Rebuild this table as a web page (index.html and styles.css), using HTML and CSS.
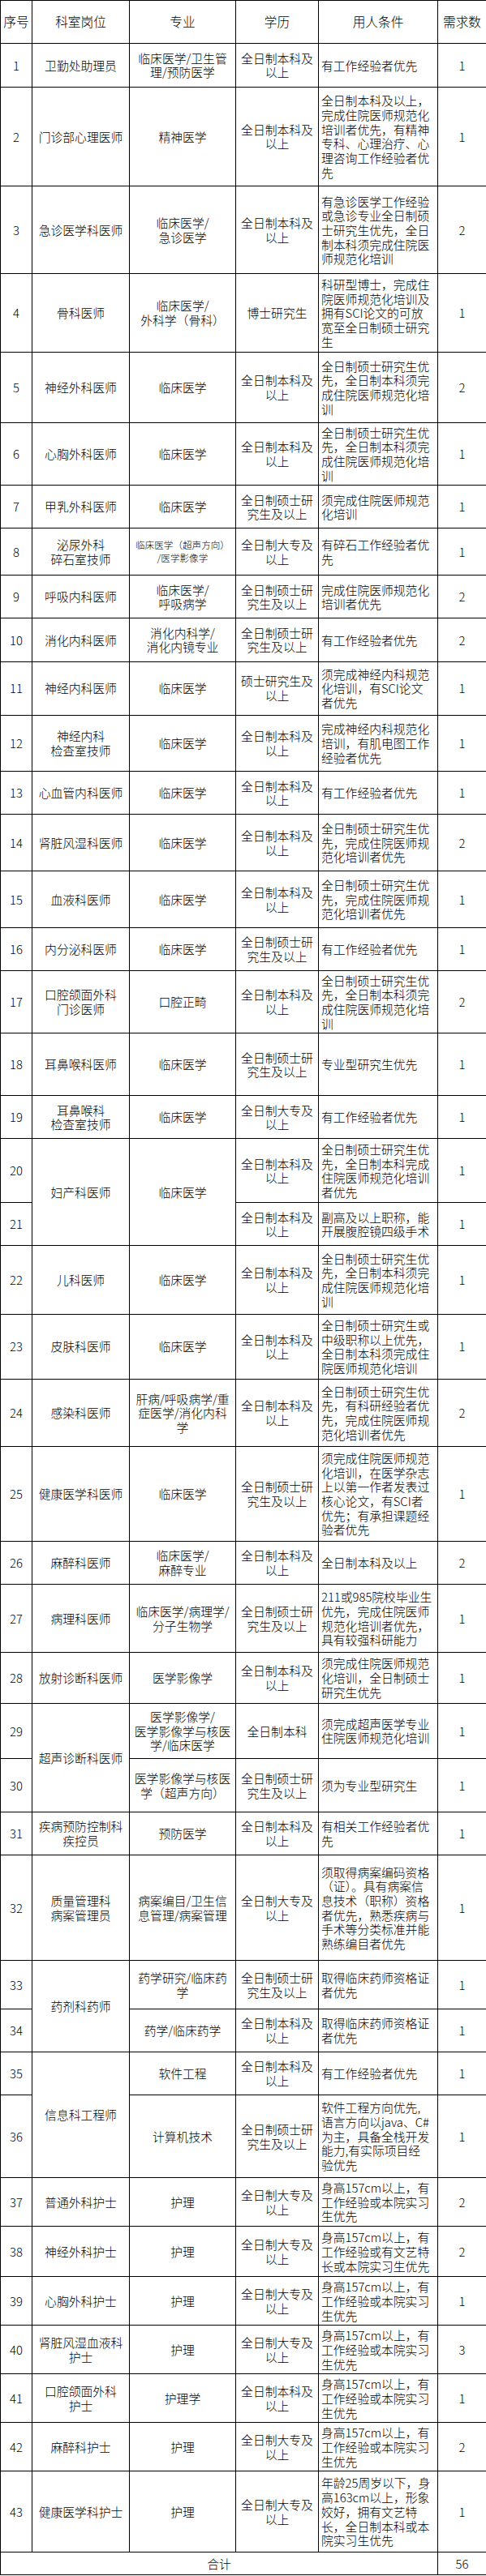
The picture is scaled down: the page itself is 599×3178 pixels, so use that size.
FILE: index.html
```html
<!DOCTYPE html>
<html lang="zh-CN">
<head>
<meta charset="utf-8">
<title>招聘岗位表</title>
<link rel="stylesheet" href="styles.css">
</head>
<body>
<table class="jobs">
<colgroup>
<col class="c-no"><col class="c-dept"><col class="c-major"><col class="c-edu"><col class="c-cond"><col class="c-num">
</colgroup>
<thead>
<tr class="h533 head"><th>序号</th><th>科室岗位</th><th>专业</th><th>学历</th><th>用人条件</th><th>需求数</th></tr>
</thead>
<tbody>
<tr class="h534"><td>1</td><td>卫勤处助理员</td><td>临床医学/卫生管<br>理/预防医学</td><td>全日制本科及<br>以上</td><td class="cond">有工作经验者优先</td><td>1</td></tr>
<tr class="h1226"><td>2</td><td>门诊部心理医师</td><td>精神医学</td><td>全日制本科及<br>以上</td><td class="cond">全日制本科及以上，<br>完成住院医师规范化<br>培训者优先，有精神<br>专科、心理治疗、心<br>理咨询工作经验者优<br>先</td><td>1</td></tr>
<tr class="h108"><td>3</td><td>急诊医学科医师</td><td>临床医学/<br>急诊医学</td><td>全日制本科及<br>以上</td><td class="cond">有急诊医学工作经验<br>或急诊专业全日制硕<br>士研究生优先，全日<br>制本科须完成住院医<br>师规范化培训</td><td>2</td></tr>
<tr class="h967"><td>4</td><td>骨科医师</td><td>临床医学/<br>外科学（骨科）</td><td>博士研究生</td><td class="cond">科研型博士，完成住<br>院医师规范化培训及<br>拥有SCI论文的可放<br>宽至全日制硕士研究<br>生</td><td>1</td></tr>
<tr class="h87"><td>5</td><td>神经外科医师</td><td>临床医学</td><td>全日制本科及<br>以上</td><td class="cond">全日制硕士研究生优<br>先，全日制本科须完<br>成住院医师规范化培<br>训</td><td>2</td></tr>
<tr class="h773"><td>6</td><td>心胸外科医师</td><td>临床医学</td><td>全日制本科及<br>以上</td><td class="cond">全日制硕士研究生优<br>先，全日制本科须完<br>成住院医师规范化培<br>训</td><td>1</td></tr>
<tr class="h53"><td>7</td><td>甲乳外科医师</td><td>临床医学</td><td>全日制硕士研<br>究生及以上</td><td class="cond">须完成住院医师规范<br>化培训</td><td>1</td></tr>
<tr class="h58"><td>8</td><td>泌尿外科<br>碎石室技师</td><td class="small">临床医学（超声方向）<br>/医学影像学</td><td>全日制大专及<br>以上</td><td class="cond">有碎石工作经验者优<br>先</td><td>1</td></tr>
<tr class="h53"><td>9</td><td>呼吸内科医师</td><td>临床医学/<br>呼吸病学</td><td>全日制硕士研<br>究生及以上</td><td class="cond">完成住院医师规范化<br>培训者优先</td><td>2</td></tr>
<tr class="h534"><td>10</td><td>消化内科医师</td><td>消化内科学/<br>消化内镜专业</td><td>全日制硕士研<br>究生及以上</td><td class="cond">有工作经验者优先</td><td>2</td></tr>
<tr class="h66"><td>11</td><td>神经内科医师</td><td>临床医学</td><td>硕士研究生及<br>以上</td><td class="cond">须完成神经内科规范<br>化培训，有SCI论文<br>者优先</td><td>1</td></tr>
<tr class="h696"><td>12</td><td>神经内科<br>检查室技师</td><td>临床医学</td><td>全日制本科及<br>以上</td><td class="cond">完成神经内科规范化<br>培训，有肌电图工作<br>经验者优先</td><td>1</td></tr>
<tr class="h53"><td>13</td><td>心血管内科医师</td><td>临床医学</td><td>全日制本科及<br>以上</td><td class="cond">有工作经验者优先</td><td>1</td></tr>
<tr class="h697"><td>14</td><td>肾脏风湿科医师</td><td>临床医学</td><td>全日制本科及<br>以上</td><td class="cond">全日制硕士研究生优<br>先，完成住院医师规<br>范化培训者优先</td><td>2</td></tr>
<tr class="h703"><td>15</td><td>血液科医师</td><td>临床医学</td><td>全日制本科及<br>以上</td><td class="cond">全日制硕士研究生优<br>先，完成住院医师规<br>范化培训者优先</td><td>1</td></tr>
<tr class="h527"><td>16</td><td>内分泌科医师</td><td>临床医学</td><td>全日制硕士研<br>究生及以上</td><td class="cond">有工作经验者优先</td><td>1</td></tr>
<tr class="h773"><td>17</td><td>口腔颌面外科<br>门诊医师</td><td>口腔正畸</td><td>全日制本科及<br>以上</td><td class="cond">全日制硕士研究生优<br>先，全日制本科须完<br>成住院医师规范化培<br>训</td><td>2</td></tr>
<tr class="h77"><td>18</td><td>耳鼻喉科医师</td><td>临床医学</td><td>全日制硕士研<br>究生及以上</td><td class="cond">专业型研究生优先</td><td>1</td></tr>
<tr class="h53"><td>19</td><td>耳鼻喉科<br>检查室技师</td><td>临床医学</td><td>全日制大专及<br>以上</td><td class="cond">有工作经验者优先</td><td>1</td></tr>
<tr class="h79"><td>20</td><td rowspan="2">妇产科医师</td><td rowspan="2">临床医学</td><td>全日制本科及<br>以上</td><td class="cond">全日制硕士研究生优<br>先，全日制本科完成<br>住院医师规范化培训<br>者优先</td><td>1</td></tr>
<tr class="h53"><td>21</td><td>全日制本科及<br>以上</td><td class="cond">副高及以上职称，能<br>开展腹腔镜四级手术</td><td>1</td></tr>
<tr class="h844"><td>22</td><td>儿科医师</td><td>临床医学</td><td>全日制本科及<br>以上</td><td class="cond">全日制硕士研究生优<br>先，全日制本科须完<br>成住院医师规范化培<br>训</td><td>1</td></tr>
<tr class="h803"><td>23</td><td>皮肤科医师</td><td>临床医学</td><td>全日制本科及<br>以上</td><td class="cond">全日制硕士研究生或<br>中级职称以上优先，<br>全日制本科须完成住<br>院医师规范化培训</td><td>1</td></tr>
<tr class="h833"><td>24</td><td>感染科医师</td><td>肝病/呼吸病学/重<br>症医学/消化内科<br>学</td><td>全日制本科及<br>以上</td><td class="cond">全日制硕士研究生优<br>先，有科研经验者优<br>先，完成住院医师规<br>范化培训者优先</td><td>2</td></tr>
<tr class="h1167"><td>25</td><td>健康医学科医师</td><td>临床医学</td><td>全日制硕士研<br>究生及以上</td><td class="cond">须完成住院医师规范<br>化培训，在医学杂志<br>上以第一作者发表过<br>核心论文，有SCI者<br>优先；有承担课题经<br>验者优先</td><td>1</td></tr>
<tr class="h533"><td>26</td><td>麻醉科医师</td><td>临床医学/<br>麻醉专业</td><td>全日制本科及<br>以上</td><td class="cond">全日制本科及以上</td><td>2</td></tr>
<tr class="h84"><td>27</td><td>病理科医师</td><td>临床医学/病理学/<br>分子生物学</td><td>全日制硕士研<br>究生及以上</td><td class="cond">211或985院校毕业生<br>优先，完成住院医师<br>规范化培训者优先，<br>具有较强科研能力</td><td>1</td></tr>
<tr class="h624"><td>28</td><td>放射诊断科医师</td><td>医学影像学</td><td>全日制本科及<br>以上</td><td class="cond">须完成住院医师规范<br>化培训，全日制硕士<br>研究生优先</td><td>1</td></tr>
<tr class="h686"><td>29</td><td rowspan="2">超声诊断科医师</td><td>医学影像学/<br>医学影像学与核医<br>学/临床医学</td><td>全日制本科</td><td class="cond">须完成超声医学专业<br>住院医师规范化培训</td><td>1</td></tr>
<tr class="h66"><td>30</td><td>医学影像学与核医<br>学（超声方向）</td><td>全日制硕士研<br>究生及以上</td><td class="cond">须为专业型研究生</td><td>1</td></tr>
<tr class="h53"><td>31</td><td>疾病预防控制科<br>疾控员</td><td>预防医学</td><td>全日制本科及<br>以上</td><td class="cond">有相关工作经验者优<br>先</td><td>1</td></tr>
<tr class="h130"><td>32</td><td>质量管理科<br>病案管理员</td><td>病案编目/卫生信<br>息管理/病案管理</td><td>全日制大专及<br>以上</td><td class="cond">须取得病案编码资格<br>（证）。具有病案信<br>息技术（职称）资格<br>者优先，熟悉疾病与<br>手术等分类标准并能<br>熟练编目者优先</td><td>1</td></tr>
<tr class="h60"><td>33</td><td rowspan="2">药剂科药师</td><td>药学研究/临床药<br>学</td><td>全日制硕士研<br>究生及以上</td><td class="cond">取得临床药师资格证<br>者优先</td><td>1</td></tr>
<tr class="h53"><td>34</td><td>药学/临床药学</td><td>全日制本科及<br>以上</td><td class="cond">取得临床药师资格证<br>者优先</td><td>1</td></tr>
<tr class="h53"><td>35</td><td rowspan="2">信息科工程师</td><td>软件工程</td><td>全日制本科及<br>以上</td><td class="cond">有工作经验者优先</td><td>1</td></tr>
<tr class="h1017"><td>36</td><td>计算机技术</td><td>全日制硕士研<br>究生及以上</td><td class="cond">软件工程方向优先,<br>语言方向以java、C#<br>为主，具备全栈开发<br>能力,有实际项目经<br>验优先</td><td>1</td></tr>
<tr class="h603"><td>37</td><td>普通外科护士</td><td>护理</td><td>全日制大专及<br>以上</td><td class="cond">身高157cm以上，有<br>工作经验或本院实习<br>生优先</td><td>2</td></tr>
<tr class="h62"><td>38</td><td>神经外科护士</td><td>护理</td><td>全日制大专及<br>以上</td><td class="cond">身高157cm以上，有<br>工作经验或有文艺特<br>长或本院实习生优先</td><td>2</td></tr>
<tr class="h60"><td>39</td><td>心胸外科护士</td><td>护理</td><td>全日制大专及<br>以上</td><td class="cond">身高157cm以上，有<br>工作经验或本院实习<br>生优先</td><td>1</td></tr>
<tr class="h60"><td>40</td><td>肾脏风湿血液科<br>护士</td><td>护理</td><td>全日制大专及<br>以上</td><td class="cond">身高157cm以上，有<br>工作经验或本院实习<br>生优先</td><td>3</td></tr>
<tr class="h60"><td>41</td><td>口腔颌面外科<br>护士</td><td>护理学</td><td>全日制本科及<br>以上</td><td class="cond">身高157cm以上，有<br>工作经验或本院实习<br>生优先</td><td>1</td></tr>
<tr class="h60"><td>42</td><td>麻醉科护士</td><td>护理</td><td>全日制大专及<br>以上</td><td class="cond">身高157cm以上，有<br>工作经验或本院实习<br>生优先</td><td>2</td></tr>
<tr class="h100"><td>43</td><td>健康医学科护士</td><td>护理</td><td>全日制大专及<br>以上</td><td class="cond">年龄25周岁以下，身<br>高163cm以上，形象<br>姣好，拥有文艺特<br>长，全日制本科或本<br>院实习生优先</td><td>1</td></tr>
<tr class="h277"><td colspan="5">合计</td><td>56</td></tr>
</tbody>
</table>
</body>
</html>
```

FILE: styles.css
```css
html, body {
  margin: 0;
  padding: 0;
  background: #ffffff;
}

.jobs {
  width: 599px;
  table-layout: fixed;
  border-collapse: collapse;
  font-family: "Noto Sans CJK SC", "Noto Sans", sans-serif;
  font-size: 14.8px;
  line-height: 17.7px;
  font-weight: 300;
  color: #000000;
}

.c-no { width: 39px; }
.c-dept { width: 120px; }
.c-major { width: 131px; }
.c-edu { width: 102px; }
.c-cond { width: 147px; }
.c-num { width: 60px; }

.jobs th,
.jobs td {
  border: 1px solid #000000;
  padding: 0;
  text-align: center;
  vertical-align: middle;
  white-space: nowrap;
  overflow: hidden;
  font-weight: 300;
}

.jobs .head th {
  font-size: 15.7px;
}

.jobs td.cond {
  text-align: left;
  padding-left: 3px;
}

.jobs td.small {
  font-size: 11.6px;
  line-height: 15.3px;
}

.h533 { height: 53.3px; }
.h534 { height: 53.4px; }
.h53 { height: 53px; }
.h527 { height: 52.7px; }
.h58 { height: 58px; }
.h60 { height: 60px; }
.h603 { height: 60.3px; }
.h62 { height: 62px; }
.h624 { height: 62.4px; }
.h66 { height: 66px; }
.h686 { height: 68.6px; }
.h696 { height: 69.6px; }
.h697 { height: 69.7px; }
.h703 { height: 70.3px; }
.h77 { height: 77px; }
.h773 { height: 77.3px; }
.h79 { height: 79px; }
.h803 { height: 80.3px; }
.h833 { height: 83.3px; }
.h84 { height: 84px; }
.h844 { height: 84.4px; }
.h87 { height: 87px; }
.h967 { height: 96.7px; }
.h100 { height: 100px; }
.h1017 { height: 101.7px; }
.h108 { height: 108px; }
.h1167 { height: 116.7px; }
.h1226 { height: 122.6px; }
.h130 { height: 130px; }
.h277 { height: 27.7px; }
```
